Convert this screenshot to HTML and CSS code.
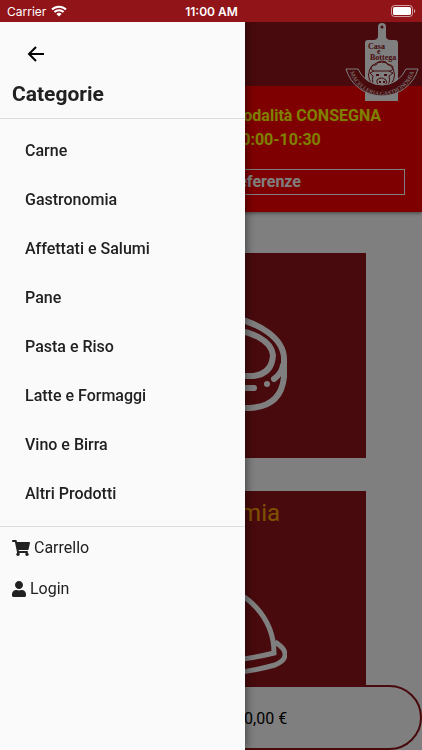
FILE: index.html
```html
<!DOCTYPE html>
<html lang="it">
<head>
<meta charset="UTF-8" />
<meta name="viewport" content="width=device-width, initial-scale=1.0" />
<title>Casa e Bottega</title>
<link rel="stylesheet" href="styles.css">
</head>

<body>
<!-- Status bar -->
<div class="status-bar">
  <div class="carrier">
    <span>Carrier</span>
    <svg class="wifi" viewBox="0 0 16 12" aria-hidden="true">
      <path d="M1 4.5A10 10 0 0 1 15 4.5" />
      <path d="M3.4 7A6.6 6.6 0 0 1 12.6 7" />
      <path class="wifi-dot" d="M8 11.6L5.4 9A3.8 3.8 0 0 1 10.6 9Z" />
    </svg>
  </div>
  <div class="clock">11:00 AM</div>
  <svg class="battery" viewBox="0 0 25 12" aria-hidden="true">
    <rect class="battery-case" x=".5" y=".5" width="21" height="11" rx="3" />
    <rect x="2" y="2" width="18" height="8" rx="1.6" />
    <path d="M23 4a2.2 2.2 0 0 1 0 4z" opacity=".6" />
  </svg>
</div>

<!-- App bar -->
<header class="app-bar">
  <svg class="logo" viewBox="0 0 74 80" role="img" aria-label="Casa e Bottega, Macelleria Gastronomia">
    <path class="board" d="M33 5a4 4 0 0 1 8 0v9q0 4 5 4h4q3 0 3 3v58H20V21q0-3 3-3h5q5 0 5-4z" />
    <circle class="ink" cx="37" cy="5" r="1.5" />
    <text class="logo-name"><tspan x="23" y="27">Casa</tspan><tspan x="32" y="32">e</tspan><tspan x="25" y="38">Bottega</tspan></text>
    <circle class="line" cx="36.500" cy="53" r="13" />
    <path class="line" d="M29 49q-4-1-3-4 1-3 5-2 1-4 6-4t6 4q4-1 5 2t-3 4zM29 49l-4 2 3 3q-2 8 3 10 5 3 10 0 5-3 3-10l4-3-4-2M32 58q4-4 9 0 2 5-4 6-6-1-5-6z" />
    <path class="ink" d="M31 52h3v2h-3zM39 52h3v2h-3zM34 59h2v2h-2zM38 59h2v2h-2zM27 61l4 4-3 1zM46 61l-4 4 4 1z" />
    <path class="ribbon" d="M1 47H13A26 26 0 0 0 61 47H73A37.500 37.500 0 0 1 1 47Z" />
    <path id="ribbonArc" class="arc" d="M4 46A33.500 33.500 0 0 0 70 46" />
    <text class="ribbon-text"><textPath href="#ribbonArc" startOffset="50%">MACELLERIA GASTRONOMIA</textPath></text>
  </svg>
</header>

<!-- Delivery banner -->
<section class="banner">
  <p>Stai facendo una spesa in modalità CONSEGNA</p>
  <p>Consegna per ore 10:00-10:30</p>
  <button class="banner-btn" type="button">Cambia le tue preferenze</button>
</section>

<!-- Categories -->
<main class="cards">
  <a class="card" href="#carne">
    <h2>Carne</h2>
    <svg viewBox="0 0 152 152" aria-hidden="true">
      <path d="M76 27C42 27 3 42 3 70V88Q5 119 38 119H114Q146 118 149 88V70C149 48 122 34 100 29Q88 27 76 27Z" />
      <path d="M76 39C44 39 14 48 14 68Q17 87 38 87H118Q137 85 138 66C136 50 114 43 104 42Q90 39 76 39Z" />
      <path d="M148 76Q147 84 139 90M40 99H119" />
      <circle cx="132" cy="95" r="3" />
    </svg>
  </a>
  <a class="card" href="#gastronomia">
    <h2>Gastronomia</h2>
    <svg class="dome" viewBox="0 0 152 152" aria-hidden="true">
      <path d="M14 126C12 92 40 60 76 60C112 60 139 92 139 126Q76 142 14 126Z" />
      <path d="M140 115C153 123 154 132 140 138Q76 156 12 138C-2 132-2 124 12 115" />
      <circle cx="76" cy="52" r="7" />
    </svg>
  </a>
</main>

<!-- Cart total -->
<footer class="total-bar">Totale carrello: 0,00 €</footer>

<div class="overlay"></div>

<!-- Side menu -->
<nav class="drawer">
  <div class="drawer-head">
    <button class="back" type="button" aria-label="Indietro">
      <svg viewBox="0 0 24 24" aria-hidden="true"><path d="M20 12H5M12 19l-7-7 7-7" /></svg>
    </button>
    <h1>Categorie</h1>
  </div>
  <ul class="categories">
    <li><a href="#carne">Carne</a></li>
    <li><a href="#gastronomia">Gastronomia</a></li>
    <li><a href="#affettati">Affettati e Salumi</a></li>
    <li><a href="#pane">Pane</a></li>
    <li><a href="#pasta">Pasta e Riso</a></li>
    <li><a href="#latte">Latte e Formaggi</a></li>
    <li><a href="#vino">Vino e Birra</a></li>
    <li><a href="#altri">Altri Prodotti</a></li>
  </ul>
  <div class="account">
    <a href="#carrello">
      <svg class="cart" viewBox="0 0 576 512" aria-hidden="true"><path d="M528.12 301.319l47.273-208C578.806 78.301 567.391 64 551.99 64H159.208l-9.166-44.81C147.758 8.021 137.93 0 126.529 0H24C10.745 0 0 10.745 0 24v16c0 13.255 10.745 24 24 24h69.883l70.248 343.435C147.325 417.1 136 435.222 136 456c0 30.928 25.072 56 56 56s56-25.072 56-56c0-15.674-6.447-29.835-16.824-40h209.647C430.447 426.165 424 440.326 424 456c0 30.928 25.072 56 56 56s56-25.072 56-56c0-22.172-12.888-41.332-31.579-50.405l5.517-24.276c3.413-15.018-8.002-29.319-23.403-29.319H218.117l-6.545-32h293.145c11.206 0 20.92-7.754 23.403-18.681z" /></svg>
      Carrello
    </a>
    <a href="#login">
      <svg class="user" viewBox="0 0 448 512" aria-hidden="true"><path d="M224 256c70.7 0 128-57.3 128-128S294.7 0 224 0 96 57.3 96 128s57.3 128 128 128zm89.6 32h-16.7c-22.2 10.2-46.9 16-72.9 16s-50.6-5.8-72.9-16h-16.7C60.2 288 0 348.2 0 422.4V464c0 26.5 21.5 48 48 48h352c26.5 0 48-21.5 48-48v-41.6c0-74.2-60.2-134.4-134.4-134.4z" /></svg>
      Login
    </a>
  </div>
</nav>
</body>
</html>
```
FILE: styles.css
```css
:root {
  --brand: #901418;
  --alert: #ff0000;
  --panel: #fafafa;
  --text: #212121;
  --line: #dedede;
  --status: 22px;
}
* { box-sizing: border-box; margin: 0; }
body { min-height: 100vh; font-family: Roboto, "Liberation Sans", sans-serif; font-size: 16px; background: #fff; color: var(--text); }
a { color: inherit; text-decoration: none; }
button { font: inherit; color: inherit; background: none; cursor: pointer; }
svg { display: block; }

/* Status bar */
.status-bar { position: sticky; top: 0; z-index: 4; display: grid; grid-template-columns: 1fr auto 1fr; align-items: center; height: var(--status); padding: 0 6px 0 7px; background: var(--brand); color: #fff; font-family: Inter, Roboto, sans-serif; font-size: 12px; }
.carrier { display: flex; align-items: center; gap: 5px; }
.clock { font-weight: 600; }
.wifi { width: 16px; height: 12px; fill: none; stroke: #fff; stroke-width: 2; }
.wifi .wifi-dot { fill: #fff; stroke: none; }
.battery { justify-self: end; width: 25px; height: 12px; fill: #fff; }
.battery .battery-case { fill: none; stroke: #fff; opacity: .6; }

/* App bar */
.app-bar { position: relative; z-index: 2; display: flex; justify-content: flex-end; height: 64px; padding-right: 3px; background: var(--brand); }
.logo { width: 74px; height: 80px; }
.logo .board { fill: #fff; }
.logo .ink { fill: var(--brand); }
.logo .line { fill: none; stroke: var(--brand); stroke-width: 1; }
.logo .ribbon { fill: var(--brand); stroke: #fff; stroke-width: 1; }
.logo .arc { fill: none; }
.logo-name { font: bold 8px "Liberation Serif", serif; fill: var(--brand); }
.ribbon-text { font: 6px "Liberation Serif", serif; fill: #fff; text-anchor: middle; }

/* Delivery banner */
.banner { position: relative; z-index: 1; padding: 18px 17px 17px; background: var(--alert); color: #ff0; font-weight: 700; line-height: 24px; text-align: center; box-shadow: 0 1px 4px rgba(0,0,0,.5); }
.banner-btn { display: block; width: 100%; height: 26px; margin-top: 17px; padding: 0; border: 1px solid #fff; color: #fff; }

/* Category cards */
.cards { display: flex; flex-direction: column; align-items: center; gap: 33px; padding-top: 41px; }
.card { display: flex; flex-direction: column; align-items: center; width: 310px; max-width: 90%; padding: 8px 0 17px; background: var(--brand); }
.card h2 { color: #ffa500; font-size: 24px; font-weight: 400; line-height: 28px; }
.card svg { width: 152px; height: 152px; fill: none; stroke: #fff; stroke-width: 6; stroke-linecap: round; }
.card .dome { stroke-width: 5; stroke-linecap: butt; }
.card circle { fill: #fff; stroke: none; }

/* Cart total */
.total-bar { position: fixed; left: 0; right: 0; bottom: 0; height: 65px; line-height: 64px; border: 2px solid var(--brand); border-radius: 33px; background: #fff; color: #000; text-align: center; }

.overlay { position: fixed; inset: 0; z-index: 3; background: rgba(0,0,0,.5); }

/* Side menu */
.drawer { position: fixed; top: var(--status); bottom: 0; left: 0; z-index: 4; width: 58%; background: var(--panel); box-shadow: 0 0 10px rgba(0,0,0,.6); clip-path: inset(0 -16px 0 0); }
.drawer-head { padding: 20px 12px 10px; border-bottom: 1px solid var(--line); }
.back { display: block; margin-left: 12px; padding: 0; border: 0; }
.back svg { width: 24px; height: 24px; fill: none; stroke: #000; stroke-width: 2; }
.drawer h1 { margin-top: 14px; font-size: 21px; font-weight: 700; line-height: 28px; }
.categories { padding: 7px 0 8px; list-style: none; border-bottom: 1px solid var(--line); }
.categories a { display: block; padding: 0 25px; font-weight: 500; line-height: 49px; }
.account a { display: flex; align-items: center; gap: 4px; height: 41px; padding-left: 12px; }
.account svg { height: 16px; fill: var(--text); }
.account .cart { width: 18px; }
.account .user { width: 14px; }
```
